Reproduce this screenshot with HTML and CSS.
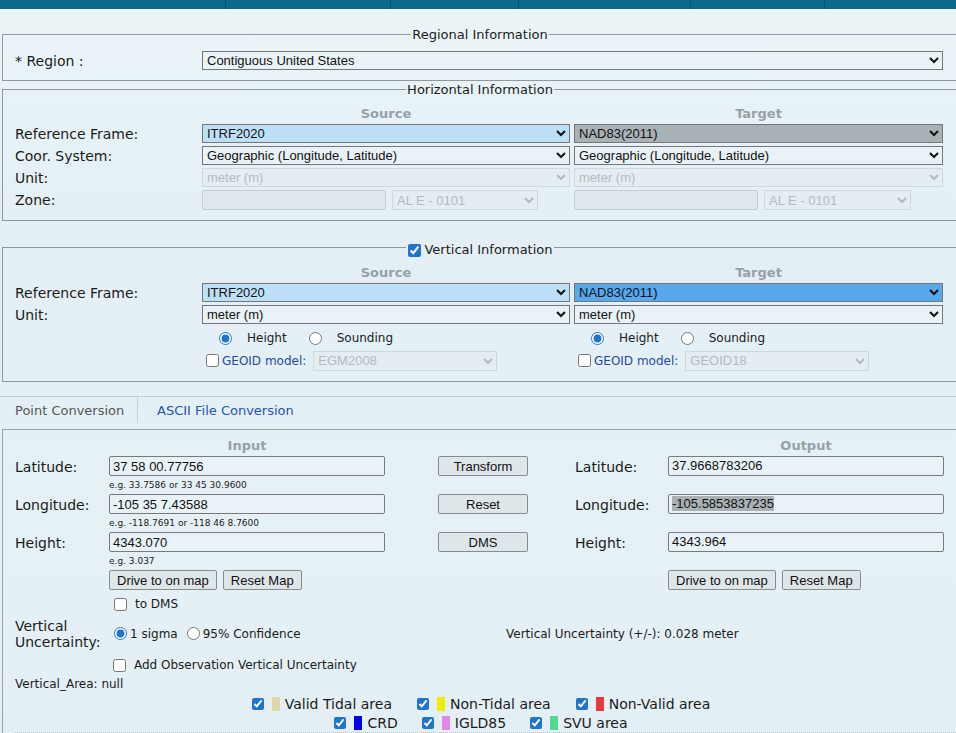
FILE: index.html
```html
<!DOCTYPE html>
<html lang="en">
<head>
<meta charset="utf-8">
<title>Coordinate Conversion</title>
<link rel="stylesheet" href="styles.css">
</head>
<body>
<div class="topbar">
  <span class="tb tb1"></span><span class="tb tb2"></span><span class="tb tb3"></span><span class="tb tb4"></span><span class="tb tb5"></span><span class="tb tb6"></span>
</div>
<div class="page">
  <fieldset class="fs fs-region">
    <legend>Regional Information</legend>
    <div class="fgrid">
      <label class="lbl">* Region :</label>
      <select class="sel span2"><option>Contiguous United States</option></select>
    </div>
  </fieldset>

  <fieldset class="fs fs-horiz">
    <legend>Horizontal Information</legend>
    <div class="fgrid">
      <div></div><div class="colhead">Source</div><div class="colhead">Target</div>
      <label class="lbl">Reference Frame:</label>
      <select class="sel hl-light"><option>ITRF2020</option></select>
      <select class="sel hl-gray"><option>NAD83(2011)</option></select>
      <label class="lbl">Coor. System:</label>
      <select class="sel"><option>Geographic (Longitude, Latitude)</option></select>
      <select class="sel"><option>Geographic (Longitude, Latitude)</option></select>
      <label class="lbl">Unit:</label>
      <select class="sel" disabled><option>meter (m)</option></select>
      <select class="sel" disabled><option>meter (m)</option></select>
      <label class="lbl">Zone:</label>
      <div class="zone"><input class="zin" type="text" disabled><select class="sel zsel" disabled><option>AL E - 0101</option></select></div>
      <div class="zone"><input class="zin" type="text" disabled><select class="sel zsel zsel-t" disabled><option>AL E - 0101</option></select></div>
    </div>
  </fieldset>

  <fieldset class="fs fs-vert">
    <legend><input class="lg-check" type="checkbox" checked>Vertical Information</legend>
    <div class="fgrid">
      <div></div><div class="colhead">Source</div><div class="colhead">Target</div>
      <label class="lbl">Reference Frame:</label>
      <select class="sel hl-light"><option>ITRF2020</option></select>
      <select class="sel hl-blue"><option>NAD83(2011)</option></select>
      <label class="lbl">Unit:</label>
      <select class="sel"><option>meter (m)</option></select>
      <select class="sel"><option>meter (m)</option></select>
      <div></div>
      <div class="radios"><input type="radio" name="hs1" checked><span class="r-first">Height</span><input type="radio" name="hs1"><span>Sounding</span></div>
      <div class="radios"><input type="radio" name="hs2" checked><span class="r-first">Height</span><input type="radio" name="hs2"><span>Sounding</span></div>
      <div></div>
      <div class="geoid"><input type="checkbox"><span class="geo-lbl">GEOID model:</span><select class="sel gsel" disabled><option>EGM2008</option></select></div>
      <div class="geoid"><input type="checkbox"><span class="geo-lbl">GEOID model:</span><select class="sel gsel" disabled><option>GEOID18</option></select></div>
    </div>
  </fieldset>

  <div class="tabs">
    <div class="tab tab-active">Point Conversion</div>
    <div class="tab tab-link">ASCII File Conversion</div>
  </div>

  <div class="panel">
    <div class="pgrid">
      <div class="phead gc2 gr1">Input</div>
      <div class="phead gc7 gr1">Output</div>

      <label class="plbl gc1 gr2">Latitude:</label>
      <input class="tin gc2 gr2" type="text" value="37 58 00.77756">
      <div class="hint gc2 gr3">e.g. 33.7586 or 33 45 30.9600</div>
      <label class="plbl gc1 gr4">Longitude:</label>
      <input class="tin gc2 gr4" type="text" value="-105 35 7.43588">
      <div class="hint gc2 gr5">e.g. -118.7691 or -118 46 8.7600</div>
      <label class="plbl gc1 gr6">Height:</label>
      <input class="tin gc2 gr6" type="text" value="4343.070">
      <div class="hint gc2 gr7">e.g. 3.037</div>
      <div class="btns gc2 gr8"><button class="btn">Drive to on map</button><button class="btn">Reset Map</button></div>

      <button class="btn btn-mid gc4 gr2">Transform</button>
      <button class="btn btn-mid gc4 gr4">Reset</button>
      <button class="btn btn-mid gc4 gr6">DMS</button>

      <label class="plbl gc6 gr2">Latitude:</label>
      <div class="field gc7 gr2">37.9668783206</div>
      <label class="plbl gc6 gr4">Longitude:</label>
      <div class="field gc7 gr4"><span class="hl">-105.5853837235</span></div>
      <label class="plbl gc6 gr6">Height:</label>
      <div class="field gc7 gr6">4343.964</div>
      <div class="btns gc7 gr8"><button class="btn">Drive to on map</button><button class="btn">Reset Map</button></div>
    </div>

    <div class="dms"><input type="checkbox"><span>to DMS</span></div>

    <div class="vu">
      <div class="vu-lbl">Vertical<br>Uncertainty:</div>
      <div class="vu-opts"><input class="vr1" type="radio" name="vu" checked><span>1 sigma</span><input class="vr2" type="radio" name="vu"><span>95% Confidence</span></div>
      <div class="vu-res">Vertical Uncertainty (+/-): 0.028 meter</div>
    </div>

    <div class="obs"><input type="checkbox"><span>Add Observation Vertical Uncertainty</span></div>

    <div class="varea">Vertical_Area: null</div>

    <div class="legend-row lr1">
      <span class="lg-item"><input type="checkbox" checked><i class="sw sw-tidal"></i>Valid Tidal area</span>
      <span class="lg-item"><input type="checkbox" checked><i class="sw sw-nontidal"></i>Non-Tidal area</span>
      <span class="lg-item"><input type="checkbox" checked><i class="sw sw-nonvalid"></i>Non-Valid area</span>
    </div>
    <div class="legend-row lr2">
      <span class="lg-item"><input type="checkbox" checked><i class="sw sw-crd"></i>CRD</span>
      <span class="lg-item"><input type="checkbox" checked><i class="sw sw-igld"></i>IGLD85</span>
      <span class="lg-item"><input type="checkbox" checked><i class="sw sw-svu"></i>SVU area</span>
    </div>
    <div class="mapedge"></div>
  </div>
</div>
</body>
</html>
```
FILE: styles.css
```css
* { box-sizing: border-box; }
html, body { margin: 0; overflow: hidden; }
body {
  width: 956px;
  height: 733px;
  font-family: "DejaVu Sans", Verdana, sans-serif;
  font-size: 14px;
  color: #1b1b1b;
  background-color: #e4f0f5;
  background-image: linear-gradient(180deg, #ebf5f8 0%, #e3eff4 35%, #e5f1f5 70%, #e3eff4 100%);
  accent-color: #1f74cc;
}

/* top navigation strip */
.topbar { display: flex; height: 9px; background: #0b6b89; }
.tb { height: 100%; border-right: 1px solid #08546c; }
.tb1 { width: 226px; }
.tb2 { width: 165px; }
.tb3 { width: 128px; }
.tb4 { width: 172px; }
.tb5 { width: 134px; }
.tb6 { flex: 1; border-right: 0; }

.page { width: 960px; }

/* fieldsets */
.fs {
  display: block;
  margin: 0 0 0 2px;
  width: 956px;
  min-width: 0;
  border: 1px solid #8f989c;
  padding: 0 12px;
}
.fs legend {
  margin: 0 auto;
  padding: 1px 1px 0;
  font-size: 13px;
  line-height: 16px;
  color: #1b1b1b;
}
.fs-region { margin-top: 17px; padding-top: 8px; padding-bottom: 10px; }
.fs-horiz { padding-top: 7px; padding-bottom: 10px; }
.fs-vert { margin-top: 15px; padding-top: 6px; padding-bottom: 11px; }
.fs-vert legend { padding-top: 6px; display: flex; align-items: center; }
.lg-check { margin: 0 3px 0 1px; width: 13px; height: 13px; }

.fgrid {
  display: grid;
  grid-template-columns: 183px 368px 369px;
  column-gap: 4px;
  row-gap: 3px;
}
.fs-region .fgrid { grid-template-rows: 19px; }
.fs-horiz .fgrid { grid-template-rows: 16px 19px 19px 19px 20px; }
.fs-vert .fgrid { grid-template-rows: 16px 19px 19px 21px 19px; }

.lbl { align-self: center; font-size: 14px; line-height: 16px; }
.span2 { grid-column: 2 / 4; }
.colhead {
  text-align: center;
  font-weight: bold;
  font-size: 13px;
  line-height: 16px;
  padding-top: 1px;
  color: #98a1a5;
}

/* selects */
.sel {
  width: 100%;
  height: 19px;
  margin: 0;
  padding: 0;
  font-family: "Liberation Sans", Arial, sans-serif;
  font-size: 13px;
  color: #111;
  border: 1px solid #767676;
  border-radius: 0;
  background-color: #e9f3f7;
}
.sel:disabled { color: #9ea4a7; border-color: #c6ced2; background-color: #e4eef2; }
.hl-light { background-color: #bde0f8; }
.hl-gray { background-color: #a8b1b5; }
.hl-blue { background-color: #58a8ec; }

.zone { display: flex; gap: 6px; }
.zin {
  width: 184px;
  height: 20px;
  margin: 0;
  border: 1px solid #c6ced2;
  border-radius: 2px;
  background: #dfe9ed;
}
.zsel { width: 146px; height: 20px; }
.zsel-t { width: 147px; }

.radios { display: flex; align-items: center; padding-left: 17px; padding-top: 1px; font-size: 12px; }
.radios input { margin: 0 15px 0 0; width: 13px; height: 13px; }
.radios .r-first { margin-right: 22px; }

.geoid { display: flex; align-items: center; font-size: 12px; }
.geoid input { margin: 0 3px 0 4px; width: 13px; height: 13px; }
.geo-lbl { color: #2348ac; margin-right: 7px; }
.gsel { width: 184px; height: 20px; }

/* tabs */
.tabs {
  display: flex;
  margin-top: 14px;
  height: 33px;
  border-top: 1px solid #c6cfd3;
  font-size: 13px;
}
.tab { height: 26px; line-height: 26px; padding-top: 1px; }
.tab-active { margin-left: 2px; width: 136px; padding-left: 13px; color: #555; border-right: 1px solid #c6cfd3; }
.tab-link { padding-left: 19px; color: #2552b3; }

/* point conversion panel */
.panel {
  margin-left: 2px;
  width: 956px;
  height: 320px;
  border-top: 1px solid #9aa3a7;
  border-left: 1px solid #9aa3a7;
  padding: 7px 0 0 12px;
}
.pgrid {
  display: grid;
  grid-template-columns: 94px 276px 53px 90px 47px 93px 276px;
  grid-template-rows: 19px 20px 18px 20px 18px 20px 18px 20px;
}
.gc1 { grid-column: 1; }
.gc2 { grid-column: 2; }
.gc4 { grid-column: 4; }
.gc6 { grid-column: 6; }
.gc7 { grid-column: 7; }
.gr1 { grid-row: 1; }
.gr2 { grid-row: 2; }
.gr3 { grid-row: 3; }
.gr4 { grid-row: 4; }
.gr5 { grid-row: 5; }
.gr6 { grid-row: 6; }
.gr7 { grid-row: 7; }
.gr8 { grid-row: 8; }

.phead {
  align-self: start;
  text-align: center;
  font-weight: bold;
  font-size: 13px;
  line-height: 16px;
  padding-top: 1px;
  color: #98a1a5;
}
.plbl { align-self: center; font-size: 14px; line-height: 16px; padding-top: 1px; }
.tin, .field {
  width: 276px;
  height: 20px;
  margin: 0;
  padding: 0 2px 0 3px;
  font-family: "Liberation Sans", Arial, sans-serif;
  font-size: 13px;
  line-height: 18px;
  color: #111;
  border: 1px solid #7a7a7a;
  border-radius: 2px;
  background: #e9f3f7;
}
.hl { background: #a9b1b5; }
.hint { font-size: 9px; line-height: 18px; color: #222; }

.btn {
  height: 20px;
  margin: 0;
  padding: 0 7px;
  font-family: "Liberation Sans", Arial, sans-serif;
  font-size: 13px;
  color: #111;
  border: 1px solid #878c8f;
  border-radius: 2px;
  background: #dfe6e9;
}
.btn-mid { width: 90px; }
.btns { display: flex; gap: 6px; }

.dms { margin-top: 4px; height: 20px; display: flex; align-items: center; padding-left: 99px; font-size: 12px; }
.dms input, .obs input { margin: 0 8px 0 0; width: 13px; height: 13px; }

.vu {
  margin-top: 3px;
  display: grid;
  grid-template-columns: 94px 397px auto;
  align-items: center;
}
.vu-lbl { font-size: 14px; line-height: 16px; padding-top: 1px; }
.vu-opts { display: flex; align-items: center; font-size: 12px; }
.vu-opts input { margin: 0 3px 0 0; width: 13px; height: 13px; }
.vu-opts .vr1 { margin-left: 5px; }
.vu-opts .vr2 { margin-left: 9px; }
.vu-res { font-size: 12px; }

.obs { margin-top: 5px; height: 20px; display: flex; align-items: center; padding-left: 98px; font-size: 12px; }
.varea { margin-top: 1px; font-size: 12px; line-height: 16px; }

.legend-row {
  display: flex;
  justify-content: center;
  gap: 25px;
  margin-left: -11px;
  font-size: 14px;
  line-height: 18px;
}
.lr1 { margin-top: 3px; }
.lr2 { margin-top: 1px; gap: 24px; }
.lg-item { display: inline-flex; align-items: center; }
.lg-item input { margin: 0 8px 0 0; width: 12px; height: 12px; }
.sw { display: inline-block; width: 8px; height: 14px; margin-right: 5px; }
.sw-tidal { background: #ddd8a8; }
.sw-nontidal { background: #eeee00; }
.sw-nonvalid { background: #e03a3a; }
.sw-crd { background: #0000ee; }
.sw-igld { background: #e088e8; }
.sw-svu { background: #52d890; }

.mapedge { margin-top: 0; height: 4px; border-top: 1px dotted #b9c5c9; }
```
